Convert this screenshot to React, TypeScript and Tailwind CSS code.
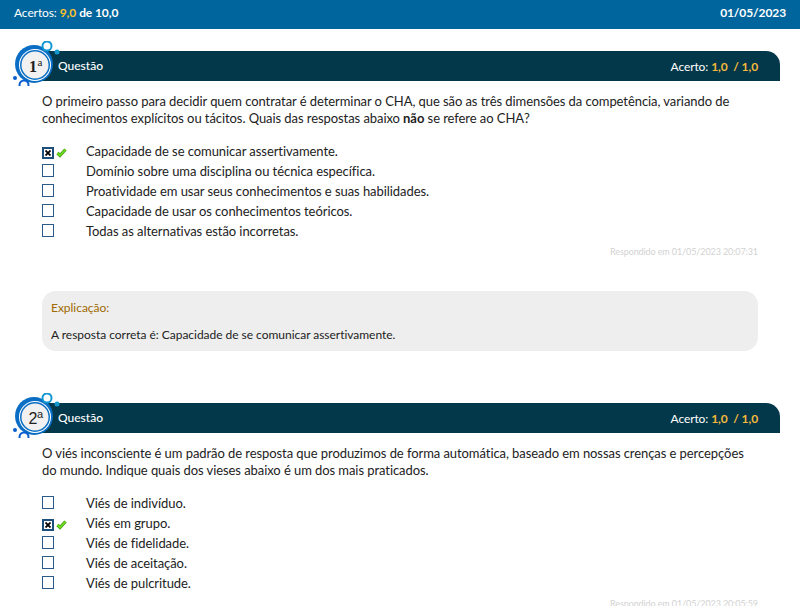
const questions = [
  {
    num: '1',
    text: (
      <>
        O primeiro passo para decidir quem contratar é determinar o CHA, que são as três dimensões da competência, variando de conhecimentos explícitos ou tácitos. Quais das respostas abaixo <b>não</b> se refere ao CHA?
      </>
    ),
    options: [
      'Capacidade de se comunicar assertivamente.',
      'Domínio sobre uma disciplina ou técnica específica.',
      'Proatividade em usar seus conhecimentos e suas habilidades.',
      'Capacidade de usar os conhecimentos teóricos.',
      'Todas as alternativas estão incorretas.',
    ],
    marked: 0,
    answered: 'Respondido em 01/05/2023 20:07:31',
    explanation: 'A resposta correta é: Capacidade de se comunicar assertivamente.',
  },
  {
    num: '2',
    text: (
      <>
        O viés inconsciente é um padrão de resposta que produzimos de forma automática, baseado em nossas crenças e percepções do mundo. Indique quais dos vieses abaixo é um dos mais praticados.
      </>
    ),
    options: ['Viés de indivíduo.', 'Viés em grupo.', 'Viés de fidelidade.', 'Viés de aceitação.', 'Viés de pulcritude.'],
    marked: 1,
    answered: 'Respondido em 01/05/2023 20:05:59',
    explanation: '',
  },
];

function Badge({ num }: { num: string }) {
  const serif = num === '1';
  const family = serif ? "'Liberation Serif', serif" : "'Liberation Sans', sans-serif";
  return (
    <svg className="absolute left-[-20px] top-[-10px]" width="50" height="45" viewBox="0 0 50 45">
      <circle cx="24" cy="23" r="19" fill="#0a6fc4" />
      <circle cx="25" cy="24" r="16" fill="#ffffff" />
      <circle cx="25" cy="24" r="15" fill="#0a6fc4" />
      <circle cx="25" cy="24" r="13.5" fill="#f1f1f1" />
      <circle cx="37" cy="5" r="4.5" fill="#ffffff" stroke="#1298cf" strokeWidth="2" />
      <circle cx="47" cy="11" r="2.5" fill="#1298cf" />
      <circle cx="5" cy="37" r="2" fill="#0a5fd0" />
      <circle cx="14" cy="44" r="4.5" fill="#ffffff" stroke="#0a5fd0" strokeWidth="2" />
      <text x="23" y="30.5" textAnchor="middle" fontSize="16" fontWeight={serif ? 'bold' : 'normal'} fill="#222222" fontFamily={family}>
        {num}
      </text>
      <text x="30" y="24.5" textAnchor="middle" fontSize="11" fill="#222222" fontFamily={family}>
        a
      </text>
    </svg>
  );
}

function Checkbox({ marked }: { marked: boolean }) {
  if (marked) {
    return (
      <div className="mt-[2px] flex h-[12px] w-[12px] items-center justify-center border-2 border-[#1d4f7c] bg-white">
        <svg width="6" height="6" viewBox="0 0 6 6">
          <path d="M0.5 0.5L5.5 5.5M5.5 0.5L0.5 5.5" stroke="#000000" strokeWidth="1.8" />
        </svg>
      </div>
    );
  }
  return <div className="mb-[3px] h-[13px] w-[12px] border border-[#2a5a8a] bg-white" />;
}

function Question({ q }: { q: (typeof questions)[number] }) {
  return (
    <section>
      <div className="relative ml-[30px] mr-[20px] flex h-[30px] items-center justify-between rounded-tr-[14px] bg-[#02384a] pl-[28px] pr-[22px]">
        <Badge num={q.num} />
        <span className="text-[12px] font-medium text-white">Questão</span>
        <span className="pt-[1px] text-[12px] tracking-[-0.1px] text-white">
          Acerto: <span className="font-bold text-[#f6b93b]">1,0 &nbsp;/ 1,0</span>
        </span>
      </div>
      <p className="ml-[42px] mr-[42px] mt-[12px] text-[13px] leading-[17px] tracking-[-0.07px] text-[#222222]">{q.text}</p>
      <ul className="ml-[42px] mt-[15px]">
        {q.options.map((opt, i) => (
          <li key={opt} className="flex h-[20px] items-center text-[13px] tracking-[-0.06px] text-[#222222]">
            <div className="flex w-[44px] items-center gap-[2px]">
              <Checkbox marked={i === q.marked} />
              {i === q.marked && (
                <svg width="11" height="10" viewBox="0 0 11 10" className="mt-[2px]">
                  <path d="M1.5 5L4 7.5L9.5 1.5" fill="none" stroke="#3f9412" strokeWidth="3.2" />
                  <path d="M1.5 5L4 7.5L9.5 1.5" fill="none" stroke="#6fe01c" strokeWidth="1.8" />
                </svg>
              )}
            </div>
            {opt}
          </li>
        ))}
      </ul>
      <p className="mr-[42px] mt-[4px] text-right text-[9px] leading-[12px] tracking-[-0.1px] text-[#d2d2d2]">{q.answered}</p>
      {q.explanation && (
        <div className="mx-[42px] mt-[33px] h-[60px] rounded-[14px] bg-[#eeeeee] px-[9px] pt-[9px] text-[12px] leading-[16px] tracking-[-0.03px]">
          <p className="text-[#a06a00]">Explicação:</p>
          <p className="mt-[11px] text-[#222222]">{q.explanation}</p>
        </div>
      )}
    </section>
  );
}

export default function App() {
  return (
    <div className="h-[606px] w-[800px] overflow-hidden bg-white font-['Lato',sans-serif]">
      <header className="flex h-[29px] items-center justify-between bg-[#00659c] px-[14px] pb-[4px] text-[12px] tracking-[-0.1px] text-white">
        <span>
          Acertos: <b className="text-[#fdc22e]">9,0</b> <b>de 10,0</b>
        </span>
        <b>01/05/2023</b>
      </header>
      <main className="flex flex-col gap-[52px] pt-[22px]">
        {questions.map((q) => (
          <Question key={q.num} q={q} />
        ))}
      </main>
    </div>
  );
}
